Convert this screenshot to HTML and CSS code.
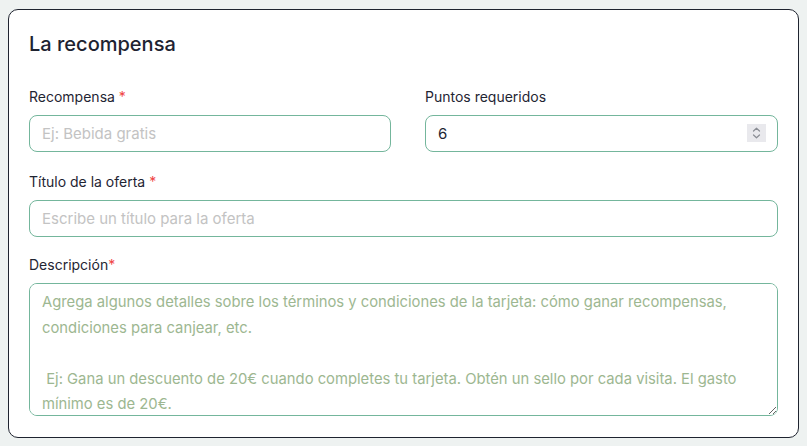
FILE: index.html
```html
<!DOCTYPE html>
<html lang="es">
<head>
<meta charset="utf-8">
<title>La recompensa</title>
<link rel="stylesheet" href="styles.css">
</head>
<body>
<section class="card">
  <h2 class="card-title">La recompensa</h2>
  <div class="row-two">
    <div class="field">
      <label class="field-label" for="reward">Recompensa <span class="req">*</span></label>
      <input class="input" id="reward" type="text" placeholder="Ej: Bebida gratis">
    </div>
    <div class="field">
      <label class="field-label" for="points">Puntos requeridos</label>
      <div class="number-wrap">
        <input class="input" id="points" type="number" value="6">
        <span class="spinner" aria-hidden="true">
          <svg width="19" height="18" viewBox="0 0 19 18">
            <path d="M6.5 7 L9.5 4.2 L12.5 7" fill="none" stroke="#8a8d94" stroke-width="1.2" stroke-linecap="round" stroke-linejoin="round"/>
            <path d="M6.5 11 L9.5 13.8 L12.5 11" fill="none" stroke="#8a8d94" stroke-width="1.2" stroke-linecap="round" stroke-linejoin="round"/>
          </svg>
        </span>
      </div>
    </div>
  </div>
  <div class="field field-tight">
    <label class="field-label" for="title">Título de la oferta <span class="req">*</span></label>
    <input class="input" id="title" type="text" placeholder="Escribe un título para la oferta">
  </div>
  <div class="field">
    <label class="field-label" for="desc">Descripción<span class="req">*</span></label>
    <textarea class="textarea" id="desc" placeholder="Agrega algunos detalles sobre los términos y condiciones de la tarjeta: cómo ganar recompensas, condiciones para canjear, etc.

 Ej: Gana un descuento de 20€ cuando completes tu tarjeta. Obtén un sello por cada visita. El gasto mínimo es de 20€."></textarea>
  </div>
</section>
</body>
</html>
```

FILE: styles.css
```css
html, body {
  margin: 0;
  padding: 0;
  background: #eef2f1;
}
body {
  padding: 9px 8px 8px;
  font-family: Inter, "Liberation Sans", sans-serif;
  color: #1f2533;
}
.card {
  box-sizing: border-box;
  width: 791px;
  height: 429px;
  background: #ffffff;
  border: 1px solid #1f2430;
  border-radius: 10px;
  padding: 20px 20px 20px;
  display: flex;
  flex-direction: column;
}
.card-title {
  margin: 0 0 29px;
  font-size: 20px;
  line-height: 28px;
  font-weight: 500;
  color: #1e2331;
}
.row-two {
  display: grid;
  grid-template-columns: 362px 1fr;
  column-gap: 34px;
}
.field {
  display: flex;
  flex-direction: column;
  margin-bottom: 20px;
}
.field-tight {
  margin-bottom: 18px;
}
.field-label {
  font-size: 14px;
  line-height: 20px;
  color: #1f2533;
  margin-bottom: 8px;
}
.req {
  color: #ef4444;
}
.input {
  box-sizing: border-box;
  height: 37px;
  width: 100%;
  border: 1px solid #74b69c;
  border-radius: 8px;
  padding: 0 12px;
  font-family: inherit;
  font-size: 15px;
  color: #1f2533;
  background: #fff;
  outline: none;
}
.input::placeholder {
  color: #c3c3c3;
}
.number-wrap {
  position: relative;
}
.input[type=number] {
  -moz-appearance: textfield;
}
.input[type=number]::-webkit-inner-spin-button,
.input[type=number]::-webkit-outer-spin-button {
  -webkit-appearance: none;
  margin: 0;
}
.spinner {
  position: absolute;
  right: 12px;
  top: 9px;
  width: 19px;
  height: 18px;
  background: #e9e9ed;
  display: flex;
}
.textarea {
  display: block;
  box-sizing: border-box;
  width: 100%;
  height: 133px;
  border: 1px solid #74b69c;
  border-radius: 8px;
  padding: 6px 12px 4px;
  font-family: inherit;
  font-size: 14.8px;
  line-height: 25.5px;
  color: #1f2533;
  background: #fff;
  outline: none;
  resize: vertical;
}
.textarea::placeholder {
  color: #9db791;
}
```
